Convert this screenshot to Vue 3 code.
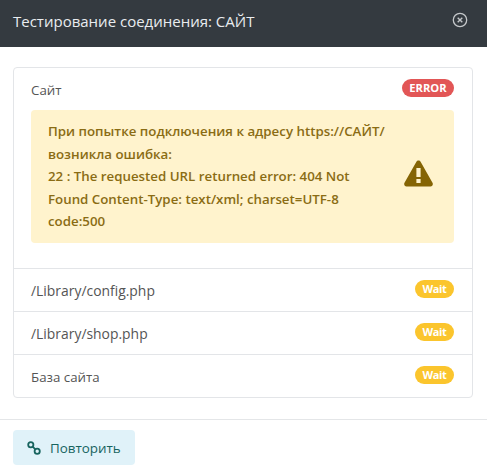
<script setup>
const waitRows = [
  { label: '/Library/config.php' },
  { label: '/Library/shop.php' },
  { label: 'База сайта', cyr: true }
]
</script>

<template>
  <div class="modal">
    <div class="modal-header">
      <span class="modal-title">Тестирование соединения: САЙТ</span>
      <svg class="close-icon" width="16" height="16" viewBox="0 0 16 16" fill="none">
        <circle cx="8" cy="8" r="6.7" stroke="#c4c7ca" stroke-width="1.3" />
        <path d="M5.7 5.7l4.6 4.6M10.3 5.7l-4.6 4.6" stroke="#c4c7ca" stroke-width="1.4" />
      </svg>
    </div>

    <div class="modal-body">
      <ul class="list">
        <li class="item item-first">
          <div class="item-head">
            <span class="cyr label">Сайт</span>
            <span class="badge badge-error">ERROR</span>
          </div>
          <div class="alert">
            <div class="alert-text">
              При попытке подключения к адресу https://САЙТ/<br />
              возникла ошибка:<br />
              22 : The requested URL returned error: 404 Not<br />
              Found Content-Type: text/xml; charset=UTF-8<br />
              code:500
            </div>
            <svg class="alert-icon" width="29" height="27" viewBox="0 0 29 27">
              <path d="M14.5 .5c.9 0 1.7.5 2.100 1.200l11.900 21c.9 1.600-.2 3.800-2 3.800H2.500c-1.800 0-2.900-2.200-2-3.800l11.900-21c.4-.7 1.200-1.200 2.100-1.200z" fill="#856404" />
              <rect x="12.400" y="8" width="4.200" height="9" fill="#fff3cd" />
              <rect x="12.400" y="19" width="4.200" height="4" fill="#fff3cd" />
            </svg>
          </div>
        </li>
        <li v-for="row in waitRows" :key="row.label" class="item item-row">
          <span class="label" :class="{ cyr: row.cyr }">{{ row.label }}</span>
          <span class="badge badge-wait">Wait</span>
        </li>
      </ul>
    </div>

    <div class="modal-footer">
      <button class="retry" type="button">
        <svg width="14" height="14" viewBox="0 0 14 14" fill="none" stroke="#17645f" stroke-width="1.800">
          <circle cx="3.800" cy="3.800" r="2.600" />
          <circle cx="10.200" cy="10.200" r="2.600" />
          <path d="M5.600 5.600l2.800 2.800" />
        </svg>
        Повторить
      </button>
    </div>
  </div>
</template>

<style scoped>
.modal {
  width: 487px;
  height: 465px;
  overflow: hidden;
  background: #fff;
  font-family: "Open Sans", "Noto Sans", sans-serif;
  font-size: 13.900px;
  color: #555;
}

.modal-header {
  height: 47px;
  padding: 0 19px 0 13px;
  background: #343a40;
  color: #e9ecef;
  display: flex;
  align-items: center;
  justify-content: space-between;
  box-sizing: border-box;
}

.modal-title {
  font-size: 15px;
  position: relative;
  top: -3px;
}

.close-icon {
  position: relative;
  top: -4px;
}

.modal-body {
  padding: 20px 14px 21px 13px;
  border-bottom: 1px solid #e4e6e8;
}

.list {
  margin: 0;
  padding: 0;
  list-style: none;
  border: 1px solid #e3e5e8;
  border-radius: 4px;
}

.item {
  padding: 0 18px 0 17px;
  box-sizing: border-box;
}

.label {
  position: relative;
  top: 1px;
}

.cyr {
  font-size: 13.300px;
}

.item-row .cyr {
  top: 2px;
}

.item-first {
  height: 200px;
  padding-top: 11px;
}

.item-head {
  display: flex;
  align-items: center;
  justify-content: space-between;
  height: 20px;
}

.item-row {
  height: 43px;
  border-top: 1px solid #e3e5e8;
  display: flex;
  justify-content: space-between;
  padding-top: 11px;
}

.badge {
  height: 18px;
  line-height: 17px;
  border-radius: 9px;
  color: #fff;
  font-weight: 700;
  text-align: center;
  box-sizing: border-box;
}

.badge-error {
  width: 52px;
  background: #e25656;
  font-size: 11.200px;
  position: relative;
  top: -1px;
}

.badge-wait {
  width: 39px;
  background: #fbc52d;
  font-size: 11px;
  letter-spacing: -0.4px;
}

.alert {
  margin-top: 11px;
  height: 133px;
  padding: 9px 17px;
  background: #fff3cd;
  border-radius: 4px;
  color: #8a6c14;
  font-size: 13.300px;
  font-weight: 600;
  line-height: 22.400px;
  display: flex;
  align-items: center;
  justify-content: space-between;
  box-sizing: border-box;
}

.alert-icon {
  margin: 0 4px 6px 0;
  flex-shrink: 0;
}

.modal-footer {
  padding: 10px 13px 0;
}

.retry {
  width: 122px;
  height: 35px;
  padding: 0 0 0 14px;
  border: none;
  border-radius: 4px;
  background: #e0f2f9;
  color: #17645f;
  font-family: inherit;
  font-size: 13.400px;
  display: flex;
  align-items: center;
  gap: 9px;
}
</style>
